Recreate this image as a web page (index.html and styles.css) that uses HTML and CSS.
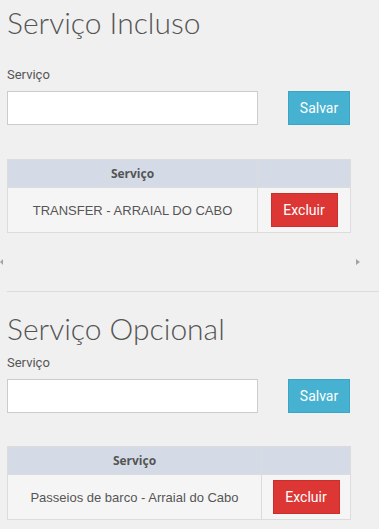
FILE: index.html
```html
<!DOCTYPE html>
<html lang="pt-BR">
<head>
<meta charset="utf-8">
<title>Serviços</title>
<link rel="stylesheet" href="styles.css">
</head>
<body>
<div class="page">
  <section class="section">
    <h1 class="title">Serviço Incluso</h1>
    <label class="label label-first">Serviço</label>
    <div class="form-row">
      <input class="input" type="text">
      <button class="btn btn-save" type="button">Salvar</button>
    </div>
    <table class="table table-a">
      <thead>
        <tr><th class="col-main">Serviço</th><th class="col-action"></th></tr>
      </thead>
      <tbody>
        <tr><td>TRANSFER - ARRAIAL DO CABO</td><td><button class="btn btn-del" type="button">Excluir</button></td></tr>
      </tbody>
    </table>
    <div class="scroll-arrows">
      <span class="arrow arrow-left"></span>
      <span class="arrow arrow-right"></span>
    </div>
  </section>
  <hr class="divider">
  <section class="section">
    <h1 class="title title-second">Serviço Opcional</h1>
    <label class="label label-second">Serviço</label>
    <div class="form-row">
      <input class="input" type="text">
      <button class="btn btn-save" type="button">Salvar</button>
    </div>
    <table class="table table-b">
      <thead>
        <tr><th class="col-main">Serviço</th><th class="col-action"></th></tr>
      </thead>
      <tbody>
        <tr><td>Passeios de barco - Arraial do Cabo</td><td><button class="btn btn-del" type="button">Excluir</button></td></tr>
      </tbody>
    </table>
  </section>
</div>
</body>
</html>
```

FILE: styles.css
```css
html, body {
  margin: 0;
  padding: 0;
  background: #f0f0f0;
}
.page {
  padding-top: 4px;
}
.section {
  padding: 0 7px;
}
.title {
  margin: 0;
  font-family: Lato, "Open Sans", sans-serif;
  font-weight: 300;
  font-size: 30px;
  line-height: 36px;
  color: #555;
}
.title-second {
  margin-top: 18px;
}
.label {
  display: block;
  font-family: Roboto, "Liberation Sans", sans-serif;
  font-size: 13px;
  line-height: 18px;
  color: #555;
}
.label-first {
  margin-top: 26px;
}
.label-second {
  margin-top: 8px;
}
.form-row {
  display: flex;
  align-items: flex-start;
  margin-top: 7px;
}
.input {
  box-sizing: border-box;
  width: 251px;
  height: 34px;
  margin: 0;
  border: 1px solid #cccccc;
  background: #fff;
  padding: 0 8px;
}
.btn {
  box-sizing: border-box;
  height: 34px;
  margin: 0;
  padding: 0;
  font-family: Roboto, "Liberation Sans", sans-serif;
  font-size: 14px;
  color: #fff;
  cursor: pointer;
}
.btn-save {
  width: 62px;
  margin-left: 30px;
  background: #46b1d0;
  border: 1px solid #3aa5c4;
}
.btn-del {
  width: 67px;
  background: #dc3735;
  border: 1px solid #cc2e2c;
  display: block;
  margin: 0 auto;
}
.table {
  width: 344px;
  margin-top: 34px;
  border-collapse: collapse;
  table-layout: fixed;
}
.table-a .col-action { width: 92px; }
.table-b .col-action { width: 88px; }
.table th,
.table td {
  border: 1px solid #dcdcdc;
  text-align: center;
  vertical-align: middle;
  padding: 0;
}
.table th {
  height: 27px;
  background: #d4dbe6;
  font-family: "Open Sans", "Liberation Sans", sans-serif;
  font-weight: 700;
  font-size: 12px;
  color: #555;
}
.table td {
  height: 44px;
  background: #f5f5f5;
  font-family: "Liberation Sans", Arial, sans-serif;
  font-size: 13px;
  color: #555;
}
.table-b {
  margin-top: 33px;
}
.scroll-arrows {
  display: flex;
  justify-content: space-between;
  width: 360px;
  margin: 26px 0 0 -7px;
  height: 7px;
}
.arrow {
  width: 0;
  height: 0;
  border-top: 3.5px solid transparent;
  border-bottom: 3.5px solid transparent;
}
.arrow-left {
  border-right: 3px solid #a3a3a3;
}
.arrow-right {
  border-left: 4px solid #a3a3a3;
}
.divider {
  margin: 25px 0 0 7px;
  border: 0;
  border-top: 1px solid #dcdcdc;
  height: 0;
}
```
